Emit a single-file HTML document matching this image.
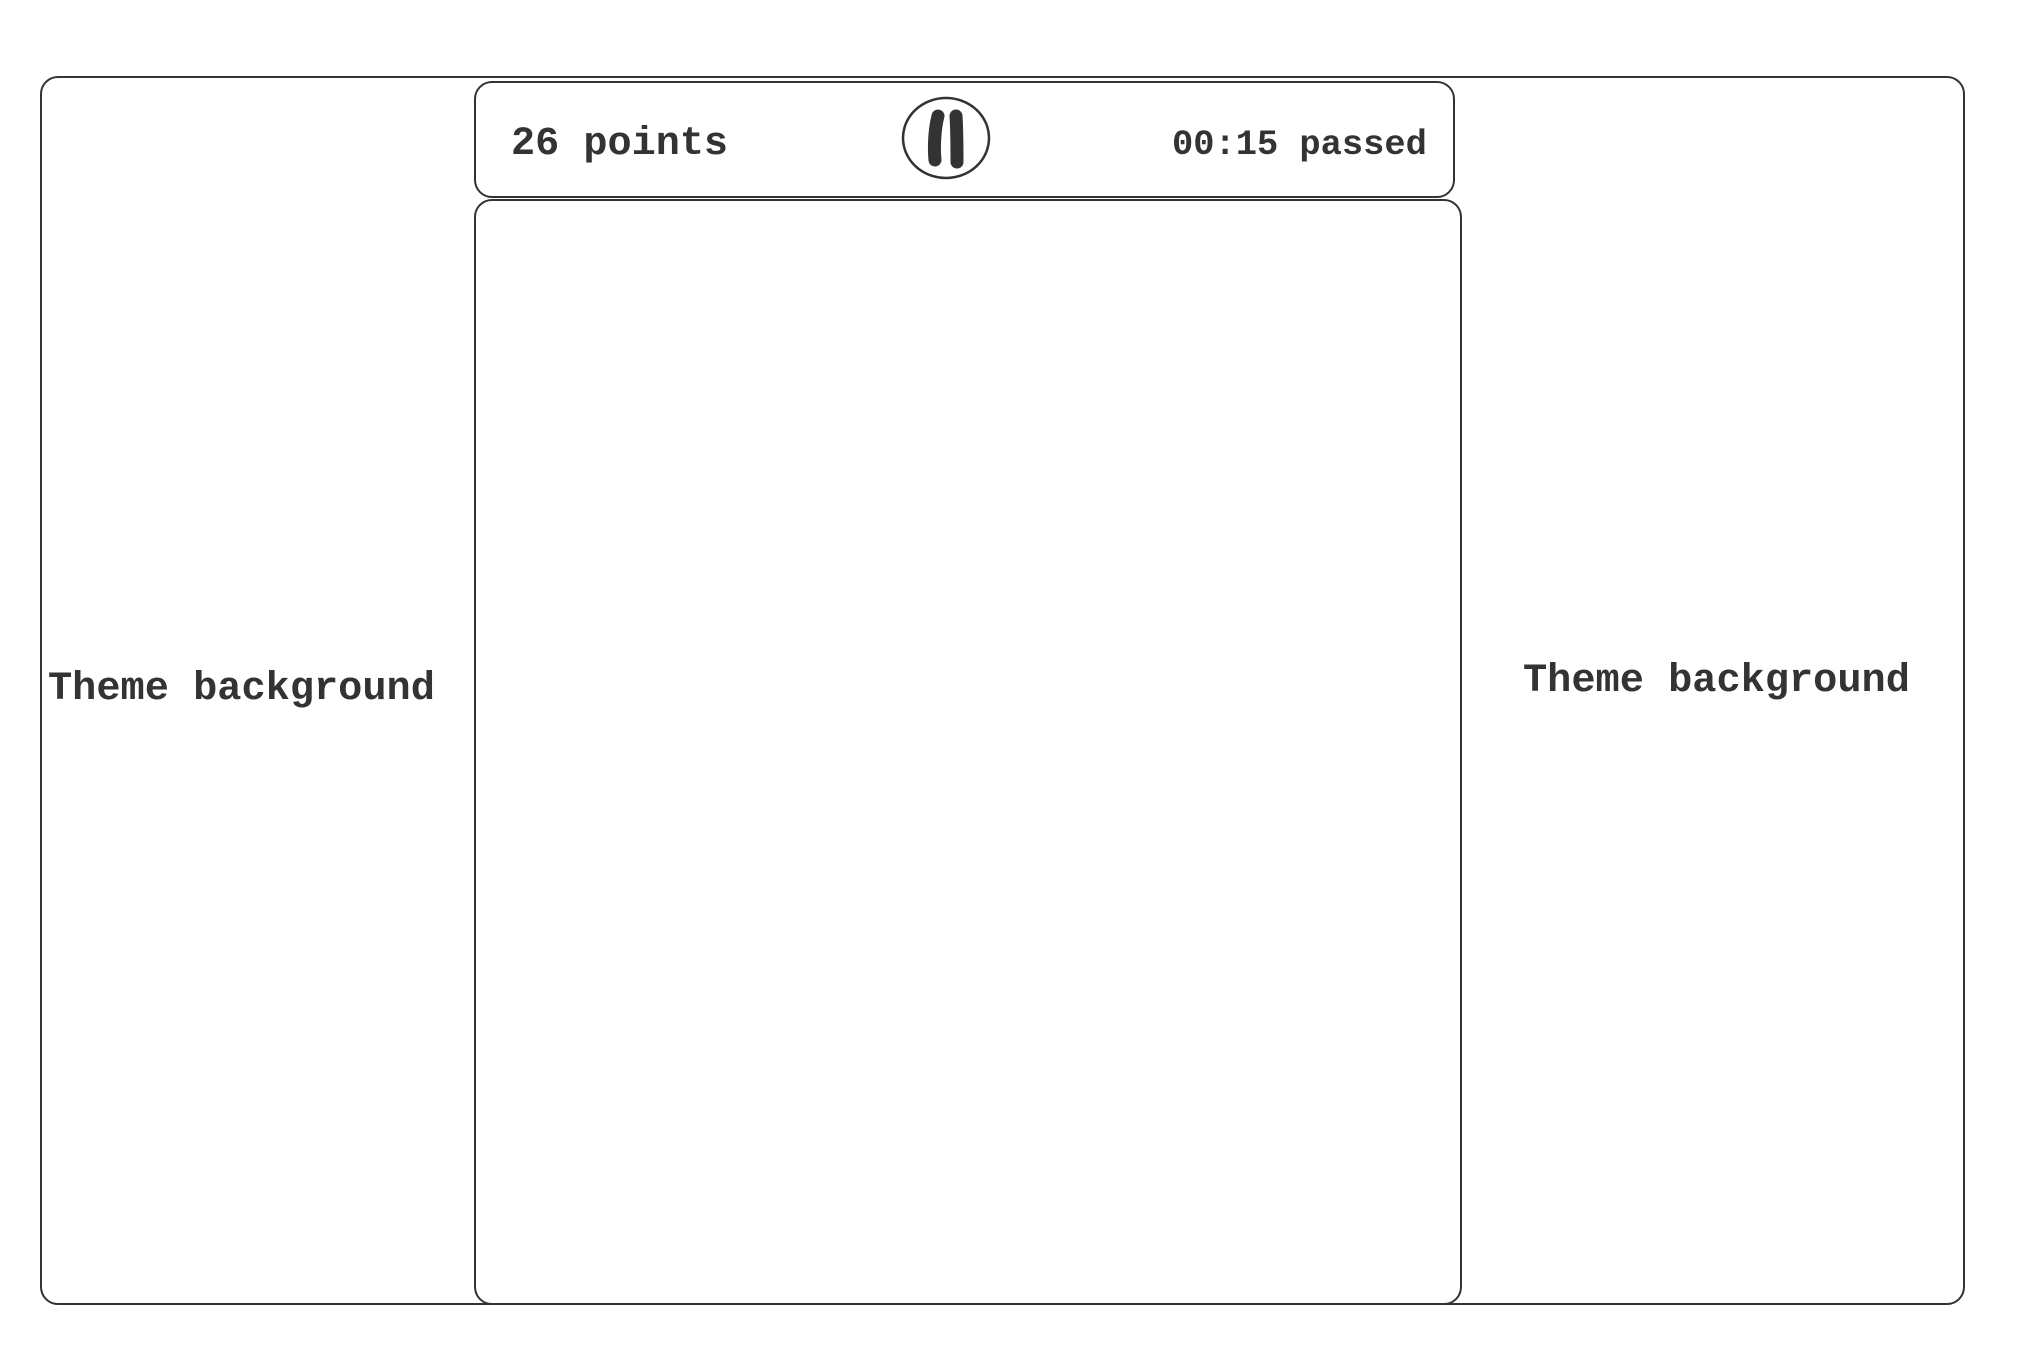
<!DOCTYPE html>
<html><head><meta charset="utf-8"><style>
html,body{margin:0;padding:0;background:#fff;}
body{width:2020px;height:1348px;position:relative;overflow:hidden;font-family:"Liberation Mono",monospace;color:#333;font-weight:bold;}
.b{position:absolute;border:2.5px solid #333;border-radius:18px;box-sizing:border-box;}
.t{position:absolute;white-space:nowrap;line-height:1;}
</style></head><body>
<div class="b" style="left:40px;top:76px;width:1925px;height:1229px;"></div>
<div class="b" style="left:474px;top:81px;width:981px;height:117px;background:#fff;"></div>
<div class="b" style="left:474px;top:199px;width:988px;height:1106px;background:#fff;"></div>
<div class="t" style="left:511px;top:125px;font-size:40.2px;">26 points</div>
<div class="t" style="left:1172px;top:128px;font-size:35.4px;">00:15 passed</div>
<svg style="position:absolute;left:900px;top:96px" width="95" height="85" viewBox="0 0 95 85">
<ellipse cx="46" cy="42" rx="43" ry="40" fill="none" stroke="#333" stroke-width="2.5"/>
<path d="M38 20 C34 35 34 55 35 64" stroke="#333" stroke-width="13" stroke-linecap="round" fill="none"/>
<path d="M56 20 C57 35 57 55 57 66" stroke="#333" stroke-width="13" stroke-linecap="round" fill="none"/>
</svg>
<div class="t" style="left:48px;top:669px;font-size:40.3px;">Theme background</div>
<div class="t" style="left:1523px;top:661px;font-size:40.3px;">Theme background</div>
</body></html>
